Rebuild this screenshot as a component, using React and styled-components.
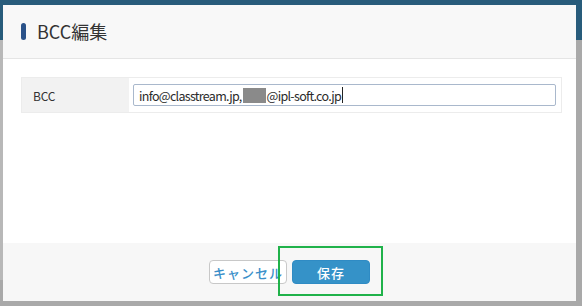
import React from "react";
import styled, { createGlobalStyle } from "styled-components";

const Global = createGlobalStyle`
  html, body { margin: 0; padding: 0; }
  body {
    width: 582px; height: 306px; overflow: hidden;
    font-family: "Noto Sans CJK JP", sans-serif;
    background: #a9a9a9;
  }
`;

const Page = styled.div`
  position: relative;
  width: 582px;
  height: 306px;
  background: #a9a9a9;
  overflow: hidden;
`;

const PageHeader = styled.div`
  height: 40px;
  background: #285c7b;
`;

const SideStrip = styled.div`
  position: absolute;
  left: 0;
  top: 40px;
  width: 3px;
  height: 240px;
  background: #b8b8b8;
`;

const Modal = styled.div`
  position: absolute;
  left: 3px;
  top: 5px;
  width: 573px;
  height: 296px;
  background: #fff;
  display: flex;
  flex-direction: column;
  box-sizing: border-box;
`;

const Header = styled.div`
  height: 54px;
  background: #f8f8f8;
  border-bottom: 1px solid #e5e5e5;
  display: flex;
  align-items: center;
  padding-left: 18px;
  gap: 11px;
  box-sizing: border-box;
  flex-shrink: 0;
`;

const TitleBar = styled.span`
  width: 5px;
  height: 17px;
  border-radius: 3px;
  background: #2a5289;
  flex-shrink: 0;
`;

const Title = styled.h1`
  margin: 0;
  font-size: 18px;
  font-weight: 400;
  color: #333;
  line-height: 1;
  padding-bottom: 1px;
`;

const Body = styled.div`
  flex: 1;
  padding: 18px 14px 0 18px;
`;

const Table = styled.div`
  display: grid;
  grid-template-columns: 107px 1fr;
  border: 1px solid #ececec;
  height: 36px;
  box-sizing: border-box;
`;

const LabelCell = styled.div`
  background: #f2f2f2;
  display: flex;
  align-items: center;
  padding-left: 11px;
  font-size: 12px;
  letter-spacing: -0.2px;
  color: #333;
`;

const ValueCell = styled.div`
  display: flex;
  align-items: center;
  padding: 0 5px 0 4px;
`;

const Input = styled.div`
  flex: 1;
  height: 22px;
  border: 1px solid #a9b8cc;
  border-radius: 2px;
  box-sizing: border-box;
  display: flex;
  align-items: center;
  padding-left: 5px;
  font-size: 12.5px;
  letter-spacing: -0.7px;
  color: #2b2b2b;
  white-space: nowrap;
`;

const Redacted = styled.span`
  display: inline-block;
  width: 23px;
  height: 15px;
  margin: 0 1px;
  background: #8a8a8a;
`;

const Caret = styled.span`
  display: inline-block;
  width: 1px;
  height: 16px;
  margin-left: 1px;
  background: #222;
`;

const Footer = styled.div`
  height: 58px;
  background: #f7f7f7;
  display: flex;
  justify-content: center;
  align-items: flex-start;
  padding-top: 17px;
  gap: 5px;
  box-sizing: border-box;
  flex-shrink: 0;
`;

const Button = styled.button`
  width: 78px;
  height: 24px;
  border-radius: 4px;
  font-family: inherit;
  font-size: 13px;
  font-weight: 500;
  letter-spacing: 1px;
  padding: 0;
  cursor: pointer;
  border: 1px solid ${(p) => (p.$primary ? "#2f8bc4" : "#c8c8c8")};
  background: ${(p) => (p.$primary ? "#3592c8" : "#fff")};
  color: ${(p) => (p.$primary ? "#fff" : "#3a8fc9")};
`;

const Highlight = styled.div`
  position: absolute;
  left: 278px;
  top: 246px;
  width: 105px;
  height: 50px;
  border: 2px solid #20b24a;
  box-sizing: border-box;
  pointer-events: none;
`;

export default function App() {
  return (
    <>
      <Global />
      <Page>
        <PageHeader />
        <SideStrip />
        <Modal>
          <Header>
            <TitleBar />
            <Title>BCC編集</Title>
          </Header>
          <Body>
            <Table>
              <LabelCell>BCC</LabelCell>
              <ValueCell>
                <Input>
                  info@classtream.jp,<Redacted />@ipl-soft.co.jp<Caret />
                </Input>
              </ValueCell>
            </Table>
          </Body>
          <Footer>
            <Button>キャンセル</Button>
            <Button $primary>保存</Button>
          </Footer>
        </Modal>
        <Highlight />
      </Page>
    </>
  );
}
